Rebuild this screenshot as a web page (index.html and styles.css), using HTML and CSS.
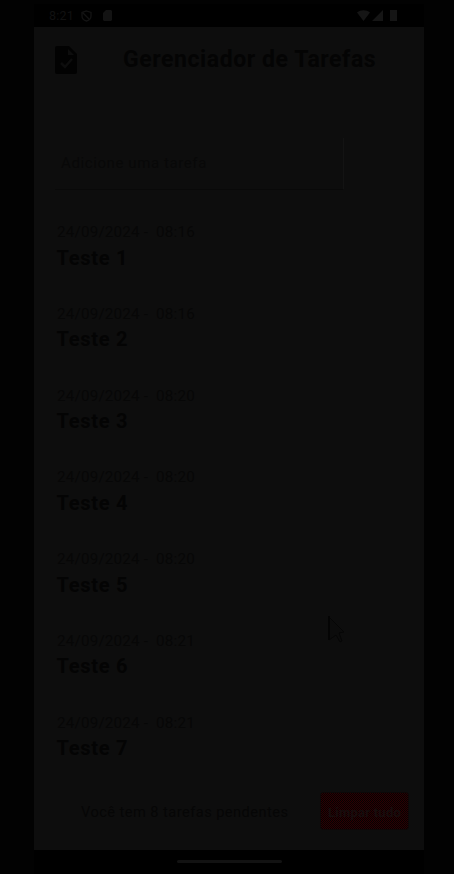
FILE: index.html
```html
<!DOCTYPE html>
<html lang="pt-BR">
<head>
<meta charset="utf-8">
<title>Gerenciador de Tarefas</title>
<link rel="stylesheet" href="styles.css">
</head>
<body>
<div class="phone">
  <div class="status">
    <span class="clock">8:21</span>
    <svg class="shield" width="11" height="12" viewBox="0 0 11 12"><path d="M5.5 1L10 2.500V6c0 2.500-2 4.300-4.500 5C3 10.300 1 8.500 1 6V2.500zM2 3l6 6" fill="none" stroke="currentColor" stroke-width="1.300"/></svg>
    <svg class="card" width="9" height="11" viewBox="0 0 9 11"><path d="M3 0h5l1 1v9l-1 1H1l-1-1V3z" fill="currentColor"/></svg>
    <svg class="signals" width="42" height="12" viewBox="0 0 42 12"><path d="M0 2.500C4-.5 9-.5 13 2.500L6.500 11zM26 0v11H15zM33 0h7v11h-7z" fill="currentColor"/></svg>
  </div>
  <main class="screen">
    <header class="header">
      <svg width="22" height="28" viewBox="0 0 22 28"><path d="M2 0h12l8 8v18q0 2-2 2H2q-2 0-2-2V2q0-2 2-2z" fill="#020202"/><path d="M13 3v6h6z" fill="#0d0d0d"/><path d="M6 17l4 4 7-8" fill="none" stroke="#0d0d0d" stroke-width="2.500"/></svg>
      <h1>Gerenciador de Tarefas</h1>
    </header>
    <div class="field">Adicione uma tarefa</div>
    <ul class="tasks">
      <li><time>24/09/2024 -&nbsp; 08:16</time><strong>Teste 1</strong></li>
      <li><time>24/09/2024 -&nbsp; 08:16</time><strong>Teste 2</strong></li>
      <li><time>24/09/2024 -&nbsp; 08:20</time><strong>Teste 3</strong></li>
      <li><time>24/09/2024 -&nbsp; 08:20</time><strong>Teste 4</strong></li>
      <li><time>24/09/2024 -&nbsp; 08:20</time><strong>Teste 5</strong></li>
      <li><time>24/09/2024 -&nbsp; 08:21</time><strong>Teste 6</strong></li>
      <li><time>24/09/2024 -&nbsp; 08:21</time><strong>Teste 7</strong></li>
    </ul>
    <footer class="footer">
      <span class="pending">Você tem 8 tarefas pendentes</span>
      <button class="clear">Limpar tudo</button>
    </footer>
  </main>
  <div class="nav"><span class="handle"></span></div>
  <svg class="cursor" width="18" height="28" viewBox="0 0 18 28"><path d="M1 1l15 15-5 1 3 8-2 1-4-7-7 5z" fill="#0c0c0c" stroke="#060606"/><path d="M1 0v24" stroke="#040404" stroke-width="2"/></svg>
</div>
</body>
</html>
```
FILE: styles.css
```css
* { box-sizing: border-box; }
body { margin: 0; height: 874px; padding-top: 4px; background: #020202; font-family: Roboto, sans-serif; overflow: hidden; }
.phone { position: relative; width: 390px; height: 870px; margin-left: 34px; background: #000; }
.status { height: 23px; display: flex; align-items: center; padding: 0 27px 0 15px; color: #131313; }
.clock { width: 26px; font-size: 12.5px; letter-spacing: 0.2px; color: #111; }
.shield { margin-left: 6px; }
.card { margin-left: 11px; }
.signals { margin-left: auto; margin-right: -2px; color: #151515; }
.screen { height: 823px; background: #0d0d0d; padding: 19px 15px 0 21px; }
.header { height: 28px; display: flex; align-items: center; }
h1 { margin: 0 0 0 46px; font-size: 23px; line-height: 28px; font-weight: 700; letter-spacing: 0.58px; color: #040404; white-space: nowrap; }
.field { width: 289px; height: 52px; margin-top: 64px; padding-left: 6px; line-height: 50px; font-size: 15px; letter-spacing: 0.6px; color: #080808; border-bottom: 1px solid #090909; border-right: 1px solid #131313; }
.tasks { list-style: none; margin: 32px 0 0; padding: 0 0 0 2px; }
.tasks li { height: 81.75px; display: flex; flex-direction: column; }
.tasks time { font-size: 15.2px; line-height: 20px; letter-spacing: 0.2px; color: #070707; }
.tasks strong { margin: 2.5px 0 0 -0.5px; font-size: 20px; line-height: 26px; letter-spacing: 0.72px; color: #040404; }
.footer { display: flex; align-items: center; justify-content: space-between; height: 38px; margin-top: -2.25px; padding-left: 26px; }
.pending { font-size: 14.6px; letter-spacing: 0.46px; line-height: 18px; padding-top: 2px; color: #060606; white-space: nowrap; }
.clear { width: 89px; height: 38px; padding: 2px 0 0; border: 1px solid #0d0707; border-radius: 3px; background: repeating-conic-gradient(#2c0002 0 25%, #060202 0 50%) 0 0 / 2px 2px; color: #170d0d; font: 700 13px Roboto, sans-serif; letter-spacing: 0.25px; white-space: nowrap; }
.nav { height: 24px; display: flex; justify-content: center; padding-top: 10px; }
.handle { width: 105px; height: 3px; border-radius: 2px; background: #121212; }
.cursor { position: absolute; left: 294px; top: 612px; }
```
